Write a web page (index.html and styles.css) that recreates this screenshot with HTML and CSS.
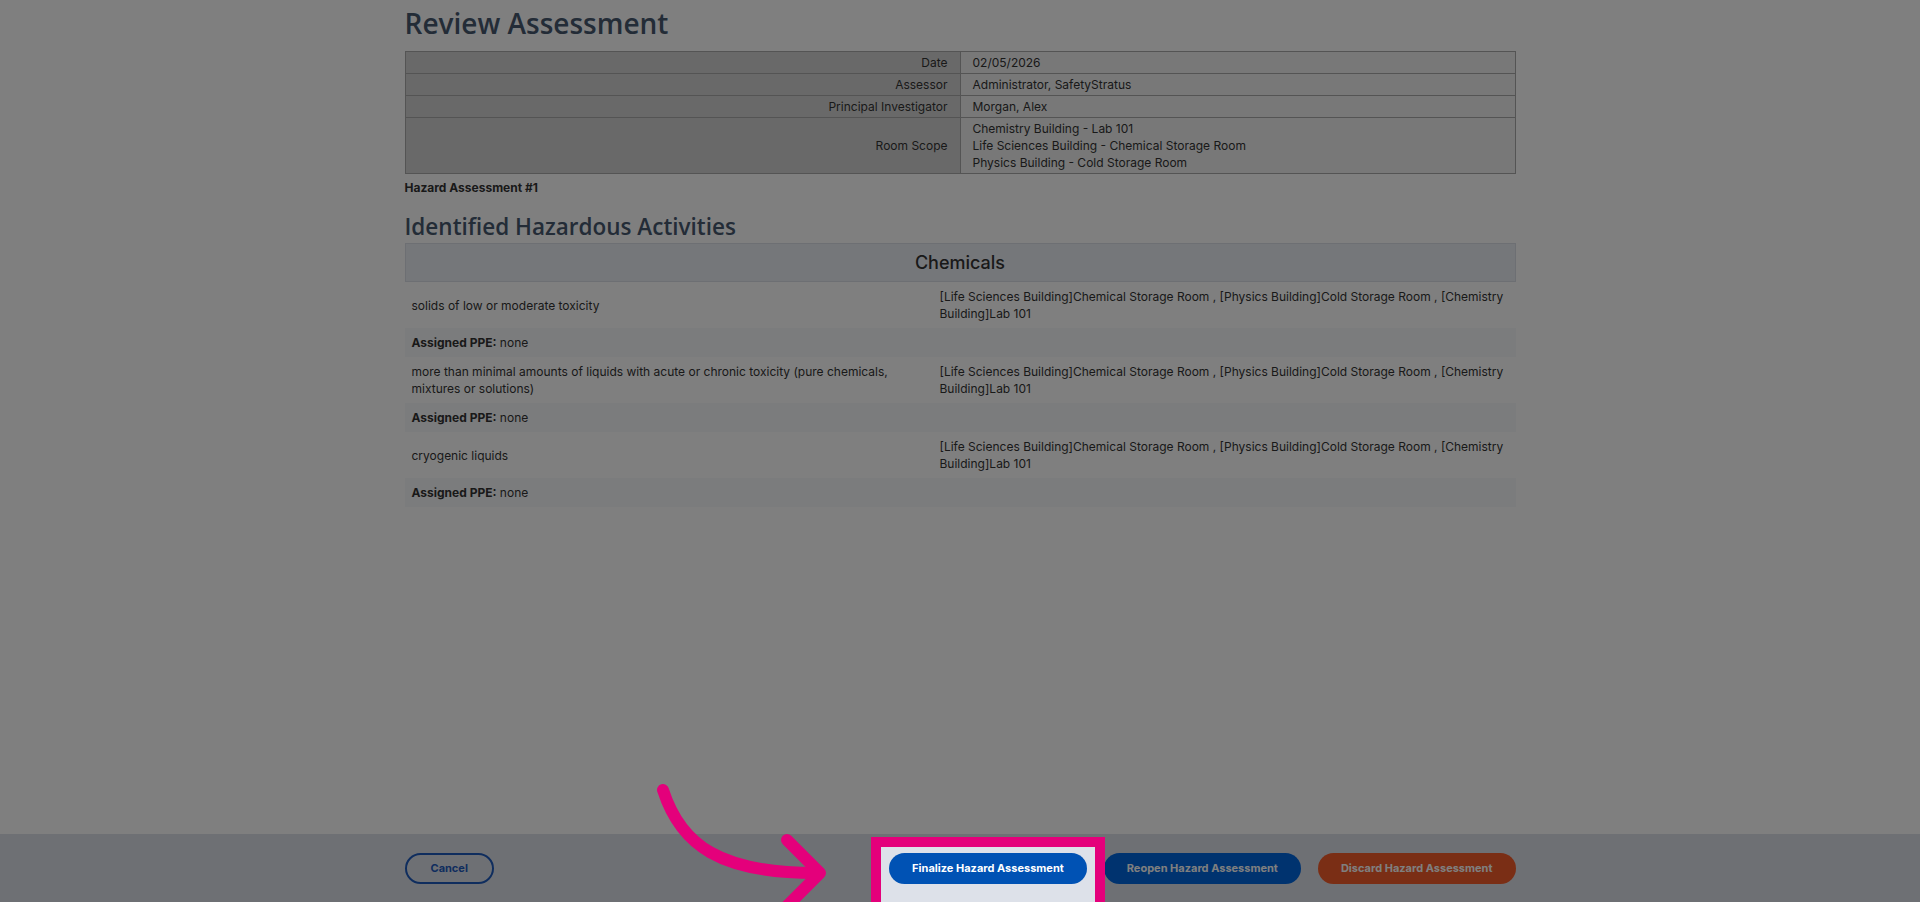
FILE: index.html
```html
<!DOCTYPE html>
<html lang="en">
<head>
    <meta charset="UTF-8">
    <meta name="viewport" content="width=device-width, initial-scale=1.0">
    <title>Review Assessment</title>
    <link rel="stylesheet" href="styles.css">
</head>
<body>
    <main class="page">
        <h1 class="page-title">Review Assessment</h1>

        <table class="summary">
            <tr><th>Date</th><td>02/05/2026</td></tr>
            <tr><th>Assessor</th><td>Administrator, SafetyStratus</td></tr>
            <tr><th>Principal Investigator</th><td>Morgan, Alex</td></tr>
            <tr>
                <th>Room Scope</th>
                <td>Chemistry Building - Lab 101<br>Life Sciences Building - Chemical Storage Room<br>Physics Building - Cold Storage Room</td>
            </tr>
        </table>

        <p class="assessment-no">Hazard Assessment #1</p>

        <h2 class="section-title">Identified Hazardous Activities</h2>
        <div class="hazards">
            <div class="hazard-group">Chemicals</div>

            <div class="activity">
                <div class="activity-name">solids of low or moderate toxicity</div>
                <div class="activity-rooms">[Life Sciences Building]Chemical Storage Room , [Physics Building]Cold Storage Room , [Chemistry Building]Lab 101</div>
            </div>
            <div class="ppe"><b>Assigned PPE:</b> none</div>

            <div class="activity">
                <div class="activity-name">more than minimal amounts of liquids with acute or chronic toxicity (pure chemicals, mixtures or solutions)</div>
                <div class="activity-rooms">[Life Sciences Building]Chemical Storage Room , [Physics Building]Cold Storage Room , [Chemistry Building]Lab 101</div>
            </div>
            <div class="ppe"><b>Assigned PPE:</b> none</div>

            <div class="activity">
                <div class="activity-name">cryogenic liquids</div>
                <div class="activity-rooms">[Life Sciences Building]Chemical Storage Room , [Physics Building]Cold Storage Room , [Chemistry Building]Lab 101</div>
            </div>
            <div class="ppe"><b>Assigned PPE:</b> none</div>
        </div>
    </main>

    <footer class="action-bar">
        <div class="action-inner">
            <button class="btn btn-outline">Cancel</button>
            <div class="action-right">
                <div class="focus-wrap">
                    <button class="btn btn-primary">Finalize Hazard Assessment</button>
                    <!-- tour step: dim the page around the finalize button -->
                    <span class="spotlight"></span>
                    <svg class="pointer" viewBox="0 0 200 140" width="200" height="140">
                        <path d="M22 19 C40 75 80 102 175 102" />
                        <path d="M146 69 L179 102 L146 135" />
                    </svg>
                </div>
                <button class="btn btn-secondary">Reopen Hazard Assessment</button>
                <button class="btn btn-danger">Discard Hazard Assessment</button>
            </div>
        </div>
    </footer>
</body>
</html>
```

FILE: styles.css
```css
html, body {
    height: 100%;
    overflow: hidden;
}
body {
    margin: 0;
    display: flex;
    flex-direction: column;
    font-family: Inter, "Liberation Sans", sans-serif;
    font-size: 12px;
    line-height: 17px;
    color: #333;
    background: #fff;
}
.page {
    flex: 1;
    width: 1111px;
    margin: 0 auto;
}
.page-title {
    margin: 0;
    padding-top: 4px;
    font-family: "Open Sans", sans-serif;
    font-weight: 600;
    font-size: 28px;
    line-height: 38px;
    color: #47586f;
}

/* summary table */
.summary {
    width: 100%;
    border-collapse: collapse;
    margin-top: 9px;
}
.summary th, .summary td {
    border: 1px solid #a9a9a9;
    padding: 2px 12px;
    vertical-align: middle;
}
.summary th {
    width: 50%;
    background: #d3d3d3;
    text-align: right;
    font-weight: normal;
}
.summary td {
    background: #f0f0f0;
    text-align: left;
}
.assessment-no {
    margin: 5px 0 0;
    font-weight: bold;
}
.section-title {
    margin: 16px 0 1px;
    font-family: "Open Sans", sans-serif;
    font-weight: 600;
    font-size: 22.5px;
    line-height: 30px;
    color: #47586f;
}

/* hazard list */
.hazard-group {
    border: 1px solid #dadee7;
    background: #ebeef5;
    padding: 6px;
    font-size: 18px;
    font-weight: 500;
    line-height: 25px;
    text-align: center;
}
.activity {
    display: grid;
    grid-template-columns: 528px 1fr;
    align-items: center;
}
.activity-name {
    padding: 6px 7px;
}
.activity-rooms {
    padding: 6px 8px 6px 7px;
}
.ppe {
    padding: 6px 7px;
    background: #f7f8fa;
}

/* bottom action bar */
.action-bar {
    flex-shrink: 0;
    height: 68px;
    background: #dde1e9;
}
.action-inner {
    width: 1111px;
    height: 100%;
    margin: 0 auto;
    display: flex;
    align-items: center;
    justify-content: space-between;
}
.action-right {
    display: flex;
    gap: 17px;
}
.btn {
    display: block;
    height: 31px;
    padding: 0 21px;
    border: 2px solid transparent;
    border-radius: 16px;
    font-family: Inter, "Liberation Sans", sans-serif;
    font-size: 11px;
    font-weight: 700;
    color: #fff;
    cursor: pointer;
}
.btn-outline {
    padding: 0 24px;
    background: transparent;
    border-color: #1f5bbd;
    color: #1f5bbd;
}
.btn-primary {
    background: #0052b4;
}
.btn-secondary {
    background: #0066de;
}
.btn-danger {
    background: #f45c2a;
}

/* walkthrough highlight */
.focus-wrap {
    position: relative;
}
.spotlight {
    position: absolute;
    left: -18px;
    right: -18px;
    top: -16px;
    height: 90px;
    border: 10px solid #e4007b;
    box-shadow: 0 0 0 3000px rgba(0, 0, 0, 0.5);
    z-index: 10;
    pointer-events: none;
}
.pointer {
    position: absolute;
    left: -248px;
    top: -82px;
    overflow: visible;
    z-index: 11;
    fill: none;
    stroke: #e4007b;
    stroke-width: 12;
    stroke-linecap: round;
    stroke-linejoin: round;
}
```
